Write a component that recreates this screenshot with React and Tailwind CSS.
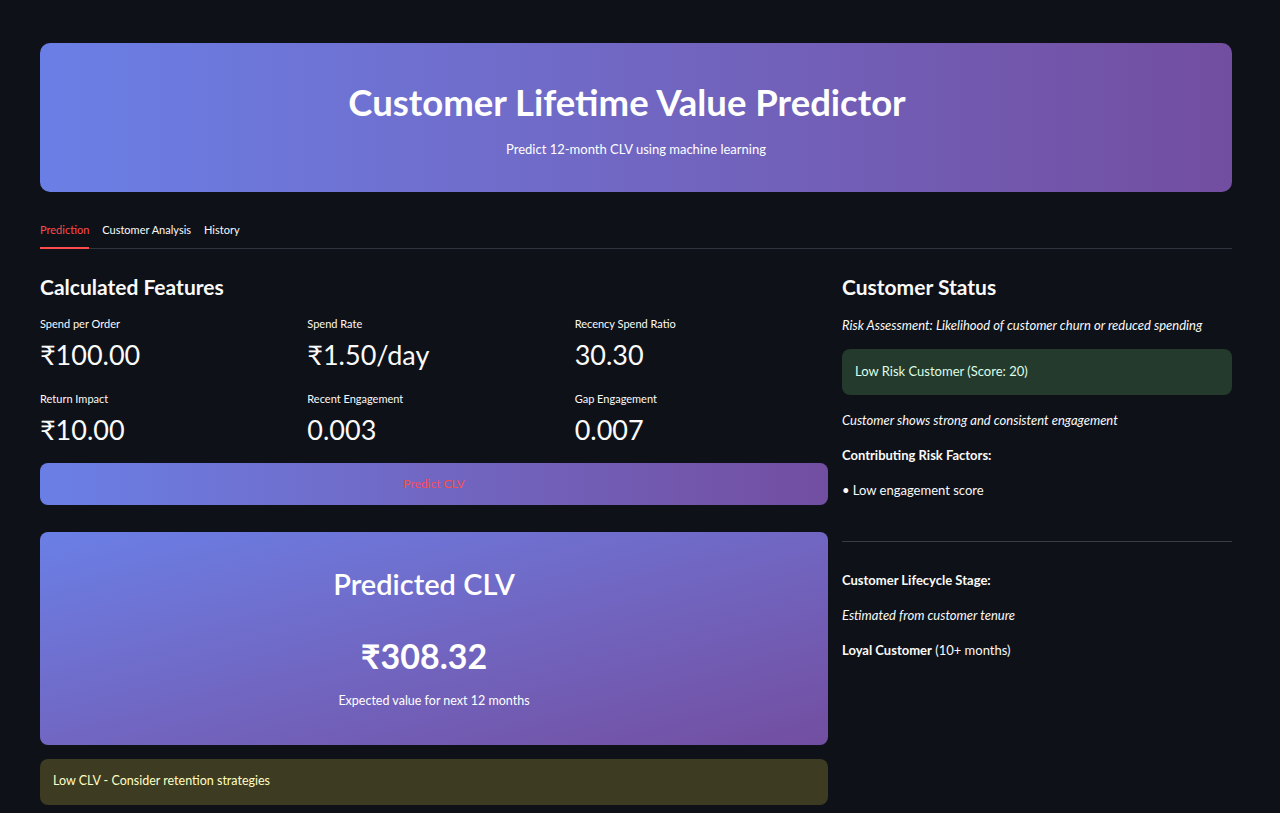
import React from 'react'

const features = [
  { label: 'Spend per Order', value: '₹100.00' },
  { label: 'Spend Rate', value: '₹1.50/day' },
  { label: 'Recency Spend Ratio', value: '30.30' },
  { label: 'Return Impact', value: '₹10.00' },
  { label: 'Recent Engagement', value: '0.003' },
  { label: 'Gap Engagement', value: '0.007' },
]

function Metric({ label, value }) {
  return (
    <div className="flex flex-col">
      <span className="text-[11px] leading-[14px] text-[#fafafa]">{label}</span>
      <span className="mt-[8px] text-[27px] leading-[32px] text-[#fafafa]">{value}</span>
    </div>
  )
}

export default function App() {
  return (
    <div className="min-h-[813px] bg-[#0e1117] text-[#fafafa] font-['Lato','Noto_Sans',sans-serif] pl-[40px] pr-[48px] pt-[43px]">
      {/* Header */}
      <div className="h-[149px] rounded-[10px] bg-gradient-to-r from-[#6a7fe6] to-[#724ea0] flex flex-col items-center justify-center">
        <h1 className="text-[36.5px] leading-[42px] font-bold text-white mt-[2px] pr-[18px]">Customer Lifetime Value Predictor</h1>
        <p className="mt-[18px] text-[13px] leading-[16px] text-white">Predict 12-month CLV using machine learning</p>
      </div>

      {/* Tabs */}
      <div className="mt-[30px] flex gap-[13px] border-b border-[#31333f] text-[11px]">
        <div className="pb-[8px] border-b-2 border-[#ff4b4b] text-[#ff4b4b] mb-[-1px]">Prediction</div>
        <div className="pb-[8px]">Customer Analysis</div>
        <div className="pb-[8px]">History</div>
      </div>

      <div className="grid grid-cols-[788px_390px] gap-[14px] mt-[24px]">
        {/* Left column */}
        <div className="flex flex-col">
          <h2 className="text-[21px] leading-[28px] font-bold">Calculated Features</h2>
          <div className="grid grid-cols-3 gap-x-[14px] gap-y-[21px] mt-[16px]">
            {features.map(f => (
              <Metric key={f.label} {...f} />
            ))}
          </div>
          <button className="mt-[17px] h-[42px] rounded-[8px] bg-gradient-to-r from-[#6a7fe6] to-[#724ea0] text-[#ff4b4b] text-[12px]">
            Predict CLV
          </button>
          <div className="mt-[27px] h-[213px] rounded-[8px] bg-gradient-to-br from-[#6a7fe6] to-[#724ea0] flex flex-col items-center pt-[36px]">
            <h3 className="text-[29px] leading-[32px] font-semibold text-white pr-[20px]">Predicted CLV</h3>
            <div className="mt-[36px] text-[34px] leading-[40px] font-bold text-white pr-[20px]">₹308.32</div>
            <p className="mt-[17px] text-[12.5px] leading-[16px] text-white">Expected value for next 12 months</p>
          </div>
          <div className="mt-[14px] h-[46px] rounded-[8px] bg-[#3d3b22] flex items-center px-[13px] text-[12.5px] text-[#ffffc2]">
            Low CLV - Consider retention strategies
          </div>
        </div>

        {/* Right column */}
        <div className="flex flex-col text-[13px]">
          <h2 className="text-[21px] leading-[28px] font-bold">Customer Status</h2>
          <p className="mt-[16px] italic leading-[16px]">Risk Assessment: Likelihood of customer churn or reduced spending</p>
          <div className="mt-[16px] h-[46px] rounded-[8px] bg-[#233a2c] flex items-center px-[13px] text-[#dffde9]">
            Low Risk Customer (Score: 20)
          </div>
          <p className="mt-[17px] italic leading-[16px]">Customer shows strong and consistent engagement</p>
          <p className="mt-[19px] font-bold leading-[16px]">Contributing Risk Factors:</p>
          <p className="mt-[19px] leading-[16px]">• Low engagement score</p>
          <div className="mt-[43px] border-t border-[#3a3c45]"></div>
          <p className="mt-[30px] font-bold leading-[16px]">Customer Lifecycle Stage:</p>
          <p className="mt-[19px] italic leading-[16px]">Estimated from customer tenure</p>
          <p className="mt-[19px] leading-[16px]"><span className="font-bold">Loyal Customer</span> (10+ months)</p>
        </div>
      </div>
    </div>
  )
}
